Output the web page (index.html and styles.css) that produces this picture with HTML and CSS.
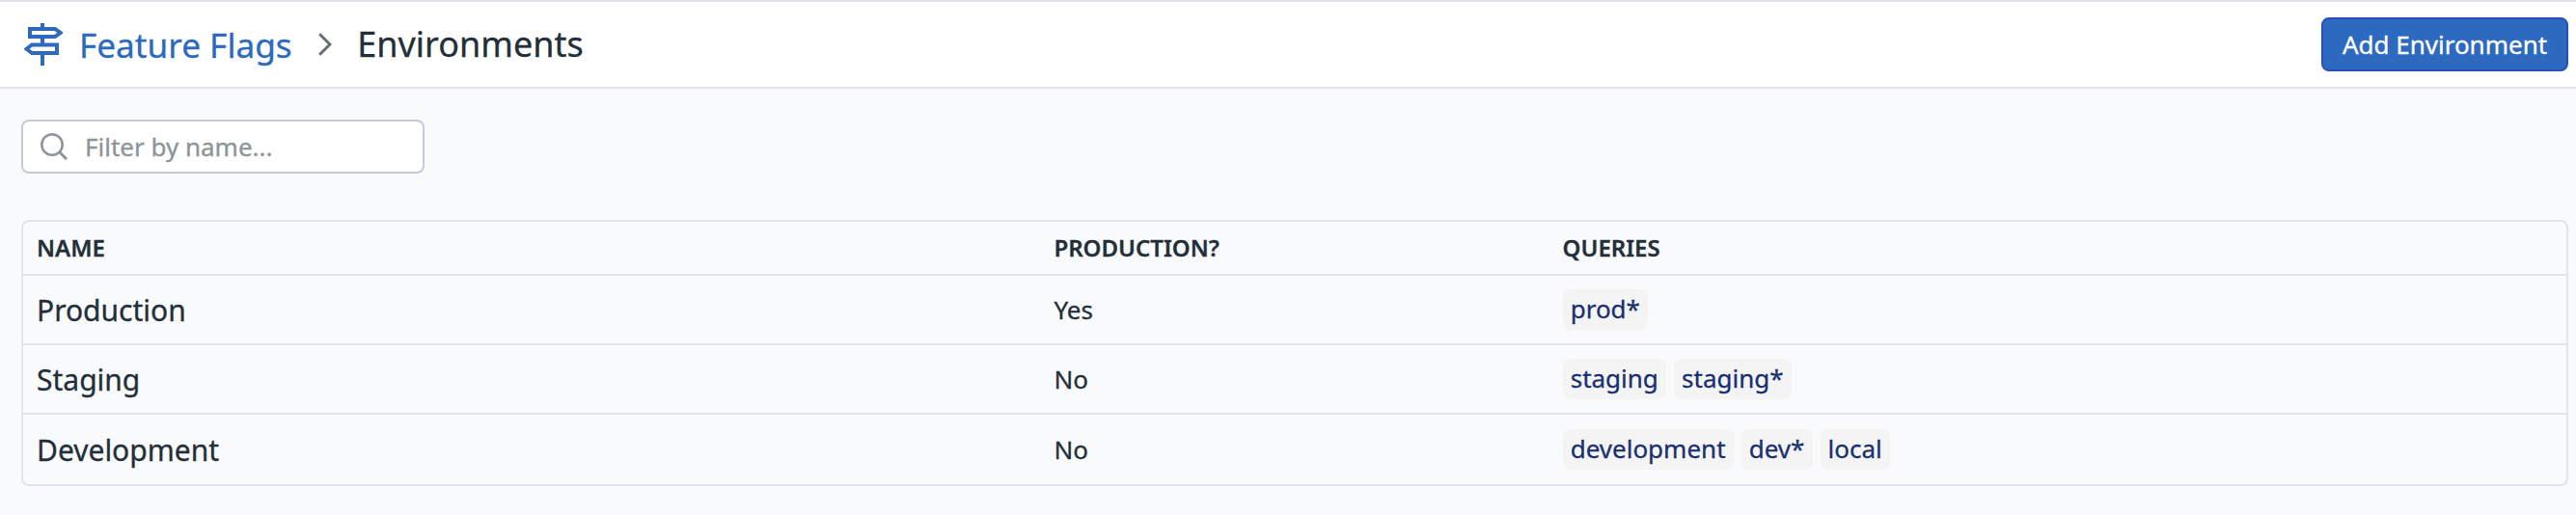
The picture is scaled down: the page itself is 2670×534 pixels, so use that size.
FILE: index.html
```html
<!DOCTYPE html>
<html lang="en">
<head>
<meta charset="utf-8">
<title>Environments</title>
<link rel="stylesheet" href="styles.css">
</head>
<body>
<header class="topbar">
  <nav class="crumbs">
    <svg class="icon-sign" viewBox="0 0 40 44" fill="none" stroke="currentColor" stroke-width="4">
      <path d="M19 0V6M19 14V22M19 31V44"/>
      <path d="M6 6H32L37.500 10L32 14H6Z"/>
      <path d="M34 22.500H8L2.500 26.750L8 31H34Z"/>
    </svg>
    <a class="crumb-link">Feature Flags</a>
    <svg class="icon-chevron" viewBox="0 0 14 24" fill="none" stroke="currentColor" stroke-width="3"><path d="M1.200 1.200L12 12L1.200 22.800"/></svg>
    <h1 class="crumb-current">Environments</h1>
  </nav>
  <button class="add">Add Environment</button>
</header>
<main class="content">
  <div class="filter">
    <svg class="icon-search" viewBox="0 0 28 28" fill="none" stroke="currentColor" stroke-width="2.500"><circle cx="12" cy="12" r="10.700"/><path d="M19.500 19.500L27 27" stroke-width="3"/></svg>
    <input class="filter-input" type="text" placeholder="Filter by name...">
  </div>
  <div class="table">
    <div class="row head"><div>NAME</div><div>PRODUCTION?</div><div>QUERIES</div></div>
    <div class="row"><div class="name">Production</div><div>Yes</div><div class="tags"><span class="tag">prod*</span></div></div>
    <div class="row"><div class="name">Staging</div><div>No</div><div class="tags"><span class="tag">staging</span><span class="tag">staging*</span></div></div>
    <div class="row last"><div class="name">Development</div><div>No</div><div class="tags"><span class="tag">development</span><span class="tag">dev*</span><span class="tag">local</span></div></div>
  </div>
</main>
</body>
</html>
```
FILE: styles.css
```css
* { box-sizing: border-box; }
body {
  margin: 0;
  height: 534px;
  background: #f9fafc;
  color: #232f38;
  font-family: "Noto Sans", sans-serif;
  font-size: 26px;
  -webkit-text-stroke: 0.3px currentColor;
}
.topbar {
  display: flex;
  align-items: center;
  justify-content: space-between;
  height: 92px;
  padding: 0 8px 0 25px;
  background: #fff;
  border-top: 2px solid #e6e0e9;
  border-bottom: 2px solid #e2e3eb;
}
.crumbs { display: flex; align-items: center; }
.icon-sign { width: 40px; height: 44px; margin-right: 17px; color: #2d6abf; }
.crumb-link { color: #2d6abf; font-size: 35.2px; line-height: 47px; padding-top: 1px; }
.icon-chevron { width: 14px; height: 24px; margin: 0 26px 0 27.5px; color: #666d75; }
.crumb-current { margin: 0; font-size: 36px; line-height: 49px; padding-bottom: 1px; font-weight: 400; }
.add {
  height: 56px;
  width: 256px;
  padding: 0;
  border: 2px solid #2450b8;
  border-radius: 8px;
  background: #2d6abf;
  color: #fff;
  font: 26px "Noto Sans", sans-serif;
}
.content { padding: 32px 8px 0 22px; }
.filter {
  display: flex;
  align-items: center;
  width: 418px;
  height: 56px;
  padding-left: 18px;
  border: 2px solid #c3c8dd;
  border-radius: 8px;
  background: #fff;
}
.icon-search { width: 28px; height: 28px; color: #8d9499; flex: none; }
.filter-input {
  flex: 1;
  min-width: 0;
  margin-left: 18px;
  padding: 0;
  border: 0;
  outline: 0;
  background: transparent;
  font: 26px "Noto Sans", sans-serif;
}
.filter-input::placeholder { color: #8d9499; }
.table {
  margin-top: 48px;
  border: 2px solid #e2e3eb;
  border-radius: 8px;
}
.row {
  display: grid;
  grid-template-columns: 40% 20% 40%;
  align-items: center;
  height: 72px;
  border-bottom: 2px solid #e2e3eb;
}
.row > div { padding-left: 14px; }
.head { height: 56px; padding-bottom: 1px; font-size: 24px; line-height: 33px; font-weight: 600; }
.last { border-bottom: 0; }
.name { font-size: 30px; }
.tags { display: flex; gap: 8px; }
.tag {
  height: 42px;
  padding: 0 8.1px;
  border-radius: 8px;
  background: #f4f4f5;
  color: #18306f;
  line-height: 40px;
}
```
